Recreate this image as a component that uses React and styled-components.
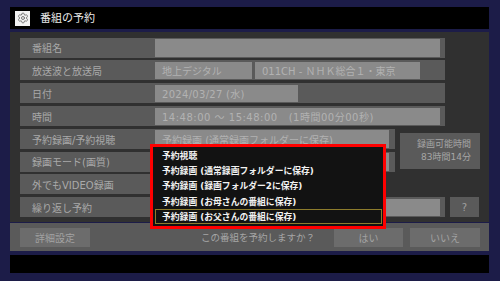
import React from 'react';
import styled, { createGlobalStyle } from 'styled-components';
import { Settings } from 'lucide-react';

const Global = createGlobalStyle`
  html, body { margin: 0; padding: 0; background: #1c1c48; }
  body { font-family: "DejaVu Sans", "Noto Sans CJK JP", sans-serif; }
  * { box-sizing: border-box; }
`;

const Screen = styled.div`
  width: 500px;
  height: 281px;
  background: #1c1c48;
  padding: 7px 11px 8px 10px;
  display: flex;
  flex-direction: column;
`;

const TitleBar = styled.div`
  height: 22px;
  background: #000;
  display: flex;
  align-items: center;
  padding-left: 5px;
  gap: 10px;
  margin-bottom: 3px;
`;

const GearBox = styled.div`
  width: 15px;
  height: 15px;
  background: #f2f2f2;
  display: flex;
  align-items: center;
  justify-content: center;
`;

const Title = styled.div`
  color: #ececec;
  font-size: 11px;
  line-height: 1;
`;

const Panel = styled.div`
  position: relative;
  height: 190px;
  background: #303030;
  padding: 5.7px 0 0 10px;
  display: flex;
  flex-direction: column;
  gap: 2.8px;
`;

const Line = styled.div`
  display: flex;
  align-items: flex-start;
`;

const Column = styled.div`
  display: flex;
  flex-direction: column;
  gap: 2.8px;
`;

const Row = styled.div`
  display: flex;
  height: 20px;
  width: ${p => p.$w}px;
  background: #5a5a5a;
  padding: 1.5px ${p => p.$pr ?? 5}px 1px 0;
`;

const Label = styled.div`
  width: 135px;
  flex: none;
  padding-left: 12px;
  color: #a9a9a9;
  font-size: 10px;
  display: flex;
  align-items: center;
  white-space: nowrap;
`;

const Field = styled.div`
  background: #8a8a8a;
  color: #b2b2b2;
  font-size: 10px;
  letter-spacing: ${p => p.$ls ?? 0}px;
  padding-left: ${p => p.$pl ?? 7}px;
  display: flex;
  align-items: center;
  white-space: pre;
  overflow: hidden;
  margin-right: ${p => p.$mr ?? 0}px;
  ${p => (p.$w ? `width: ${p.$w}px; flex: none;` : 'flex: 1;')}
`;

const InfoBox = styled.div`
  margin-left: 5px;
  margin-top: 4px;
  width: 80px;
  height: 36px;
  background: #5a5a5a;
  color: #a6a6a6;
  font-size: 9px;
  line-height: 12.7px;
  text-align: right;
  padding: 5px 9px 0 0;
`;

const SmallButton = styled.div`
  margin-left: 5px;
  width: 29px;
  height: 20px;
  background: #5a5a5a;
  color: #a0a0a0;
  font-size: 10px;
  display: flex;
  align-items: center;
  justify-content: center;
`;

const Menu = styled.div`
  position: absolute;
  left: 140px;
  top: 112px;
  width: 236px;
  height: 85px;
  border: 3px solid #ff0000;
  background: #121212;
  padding-top: 0.5px;
  display: flex;
  flex-direction: column;
`;

const MenuItem = styled.div`
  height: 15.3px;
  margin: 0 1px 0 2px;
  padding-left: 6px;
  border: 1px solid ${p => (p.$active ? '#8d7c2c' : 'transparent')};
  color: #f2f2f2;
  font-size: 8.8px;
  font-weight: bold;
  display: flex;
  align-items: center;
  white-space: pre;
`;

const BottomBar = styled.div`
  margin-top: 1px;
  height: 28px;
  background: #5a5a5a;
  display: flex;
  align-items: center;
  padding: 0 9px 0 10px;
`;

const BarButton = styled.div`
  width: ${p => p.$w}px;
  height: 19px;
  margin-left: ${p => p.$ml ?? 0}px;
  background: #6c6c6c;
  color: #a2a2a2;
  font-size: 10px;
  display: flex;
  align-items: center;
  justify-content: center;
`;

const Prompt = styled.div`
  margin-left: 111px;
  color: #a6a6a6;
  font-size: 9.5px;
  white-space: nowrap;
`;

const Spacer = styled.div`
  flex: 1;
`;

const StatusBar = styled.div`
  margin-top: 4px;
  height: 18px;
  background: #000;
`;

const menuItems = [
  '予約視聴',
  '予約録画 (通常録画フォルダーに保存)',
  '予約録画 (録画フォルダー2に保存)',
  '予約録画 (お母さんの番組に保存)',
  '予約録画 (お父さんの番組に保存)',
];

export default function App() {
  return (
    <>
      <Global />
      <Screen>
        <TitleBar>
          <GearBox>
            <Settings size={12} color="#7a7a7a" strokeWidth={2} />
          </GearBox>
          <Title>番組の予約</Title>
        </TitleBar>
        <Panel>
          <Row $w={425}>
            <Label>番組名</Label>
            <Field />
          </Row>
          <Row $w={425}>
            <Label>放送波と放送局</Label>
            <Field $w={97} $mr={3}>地上デジタル</Field>
            <Field $w={165} $pl={7}>011CH - ＮＨＫ総合１・東京</Field>
          </Row>
          <Row $w={425}>
            <Label>日付</Label>
            <Field $w={143} $ls={0.3}>2024/03/27 (水)</Field>
          </Row>
          <Row $w={425}>
            <Label>時間</Label>
            <Field $ls={0.5}>{'14:48:00 ～ 15:48:00   (1時間00分00秒)'}</Field>
          </Row>
          <Line>
            <Column>
              <Row $w={375} $pr={6}>
                <Label>予約録画/予約視聴</Label>
                <Field>予約録画 (通常録画フォルダーに保存)</Field>
              </Row>
              <Row $w={375} $pr={6}>
                <Label>録画モード(画質)</Label>
                <Field />
              </Row>
              <Row $w={360} $pr={6}>
                <Label>外でもVIDEO録画</Label>
                <Field />
              </Row>
            </Column>
            <InfoBox>
              録画可能時間
              <br />
              83時間14分
            </InfoBox>
          </Line>
          <Line>
            <Row $w={425}>
              <Label>繰り返し予約</Label>
              <Field />
            </Row>
            <SmallButton>?</SmallButton>
          </Line>
          <Menu>
            {menuItems.map((t, i) => (
              <MenuItem key={t} $active={i === menuItems.length - 1}>
                {t}
              </MenuItem>
            ))}
          </Menu>
        </Panel>
        <BottomBar>
          <BarButton $w={70}>詳細設定</BarButton>
          <Prompt>この番組を予約しますか？</Prompt>
          <Spacer />
          <BarButton $w={69}>はい</BarButton>
          <BarButton $w={70} $ml={7}>いいえ</BarButton>
        </BottomBar>
        <StatusBar />
      </Screen>
    </>
  );
}
